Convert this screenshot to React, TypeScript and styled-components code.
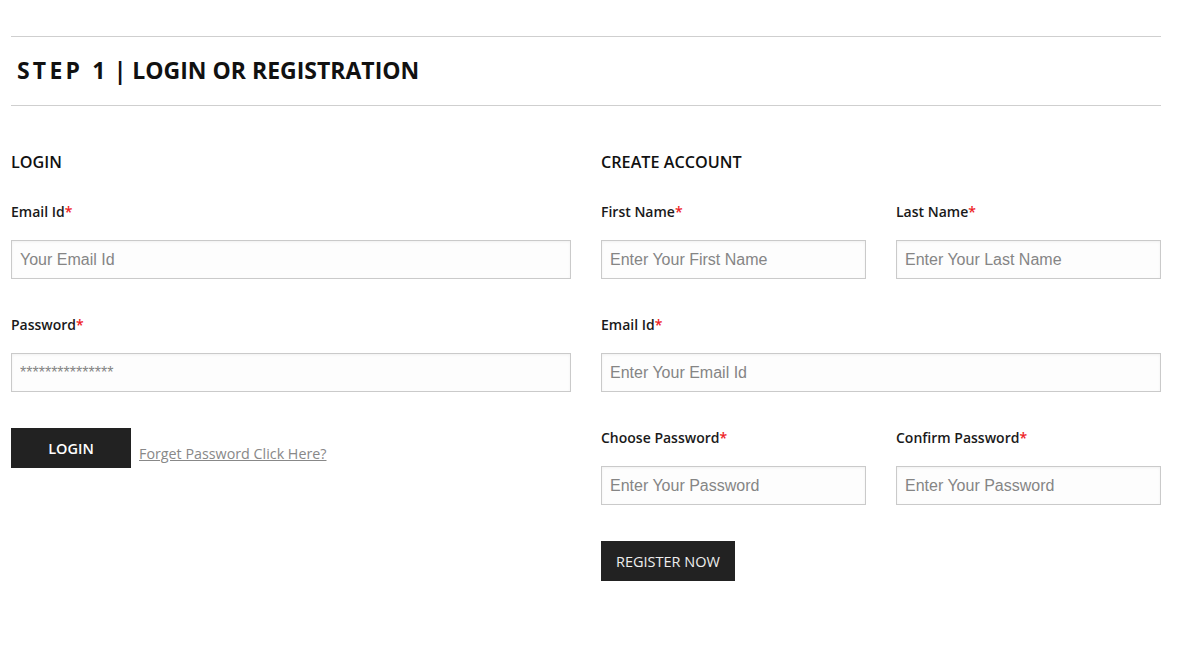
import React from "react";
import styled, { createGlobalStyle } from "styled-components";

const GlobalStyle = createGlobalStyle`
    body {
        margin: 0;
        background: #fff;
        font-family: "Open Sans", "Liberation Sans", sans-serif;
        color: #111;
    }
`;

const Page = styled.div`
    width: 1150px;
    padding: 36px 0 0 11px;
`;

const StepHeader = styled.div`
    box-sizing: border-box;
    height: 70px;
    border-top: 1px solid #cfcfcf;
    border-bottom: 1px solid #cfcfcf;
    display: flex;
    align-items: center;
    padding: 0 0 3px 6px;
`;

const StepTitle = styled.h1`
    margin: 0;
    font-size: 23px;
    font-weight: 700;
    line-height: 30px;
    color: #111;
    span {
        letter-spacing: 3.2px;
        margin-right: 5px;
    }
`;

const Columns = styled.div`
    display: grid;
    grid-template-columns: 560px 560px;
    column-gap: 30px;
    padding-top: 44px;
`;

const Section = styled.section`
    display: flex;
    flex-direction: column;
`;

const SectionTitle = styled.h2`
    margin: 0 0 28px;
    font-size: 16.2px;
    font-weight: 600;
    line-height: 24px;
    color: #111;
`;

const FieldGrid = styled.div`
    display: grid;
    grid-template-columns: 265px 265px;
    column-gap: 30px;
`;

const Field = styled.div<{ $wide?: boolean }>`
    display: flex;
    flex-direction: column;
    grid-column: ${p => (p.$wide ? "1 / -1" : "auto")};
    margin-bottom: 36px;
`;

const Label = styled.label`
    font-size: 14px;
    font-weight: 600;
    line-height: 20px;
    color: #1a1a1a;
    margin-bottom: 18px;
    em {
        font-style: normal;
        color: #ee1c25;
    }
`;

const Input = styled.input`
    box-sizing: border-box;
    height: 39px;
    width: 100%;
    border: 1px solid #cacaca;
    background: #fdfdfd;
    box-shadow: inset 0 1px 3px rgba(0, 0, 0, 0.05);
    padding: 0 8px;
    font-family: "Liberation Sans", Arial, sans-serif;
    font-size: 16px;
    color: #333;
    outline: none;
    &::placeholder {
        color: #858585;
    }
`;

const Actions = styled.div`
    display: flex;
    align-items: flex-end;
`;

const Button = styled.button<{ $width?: number; $bold?: boolean }>`
    height: 40px;
    ${p => (p.$width ? `width: ${p.$width}px;` : "padding: 0 15px;")}
    background: #222;
    border: none;
    color: ${p => (p.$bold ? "#fff" : "#eee")};
    font-family: "Open Sans", sans-serif;
    font-size: 14.5px;
    font-weight: ${p => (p.$bold ? 600 : 400)};
    cursor: pointer;
`;

const ForgotLink = styled.a`
    margin: 0 0 4px 8px;
    font-size: 14.3px;
    line-height: 20px;
    color: #888;
    text-decoration: underline;
    cursor: pointer;
`;

const Req: React.FC<{ text: string }> = ({ text }) => (
    <Label>
        {text}
        <em>*</em>
    </Label>
);

const App: React.FC = () => {
    return (
        <Page>
            <GlobalStyle />
            <StepHeader>
                <StepTitle>
                    <span>STEP 1</span>| LOGIN OR REGISTRATION
                </StepTitle>
            </StepHeader>
            <Columns>
                <Section>
                    <SectionTitle>LOGIN</SectionTitle>
                    <Field>
                        <Req text="Email Id" />
                        <Input placeholder="Your Email Id" />
                    </Field>
                    <Field>
                        <Req text="Password" />
                        <Input placeholder="***************" />
                    </Field>
                    <Actions>
                        <Button $width={120} $bold>LOGIN</Button>
                        <ForgotLink>Forget Password Click Here?</ForgotLink>
                    </Actions>
                </Section>
                <Section>
                    <SectionTitle>CREATE ACCOUNT</SectionTitle>
                    <FieldGrid>
                        <Field>
                            <Req text="First Name" />
                            <Input placeholder="Enter Your First Name" />
                        </Field>
                        <Field>
                            <Req text="Last Name" />
                            <Input placeholder="Enter Your Last Name" />
                        </Field>
                        <Field $wide>
                            <Req text="Email Id" />
                            <Input placeholder="Enter Your Email Id" />
                        </Field>
                        <Field>
                            <Req text="Choose Password" />
                            <Input placeholder="Enter Your Password" />
                        </Field>
                        <Field>
                            <Req text="Confirm Password" />
                            <Input placeholder="Enter Your Password" />
                        </Field>
                    </FieldGrid>
                    <Actions>
                        <Button>REGISTER NOW</Button>
                    </Actions>
                </Section>
            </Columns>
        </Page>
    );
};

export default App;
